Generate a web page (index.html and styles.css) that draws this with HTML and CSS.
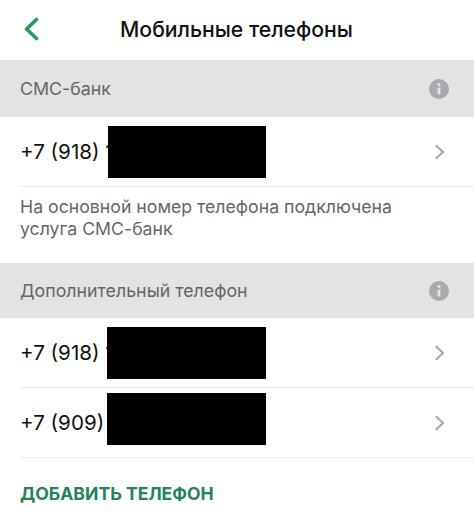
FILE: index.html
```html
<!DOCTYPE html>
<html lang="ru">
<head>
    <meta charset="UTF-8">
    <meta name="viewport" content="width=device-width, initial-scale=1.0">
    <title>Мобильные телефоны</title>
    <link rel="stylesheet" href="styles.css">
</head>
<body>
    <div class="screen">
        <header class="topbar">
            <svg class="back" width="16" height="24" viewBox="0 0 16 24"><path d="M13.5 2.5 3.5 12l10 9.5" fill="none" stroke="#259a62" stroke-width="3.6" stroke-linecap="round" stroke-linejoin="round"/></svg>
            <h1>Мобильные телефоны</h1>
        </header>

        <div class="band">
            <span class="band-title">СМС-банк</span>
            <svg class="info" width="20" height="20" viewBox="0 0 20 20"><circle cx="10" cy="10" r="10" fill="#a9a9ae"/><circle cx="10" cy="5.6" r="1.5" fill="#e3e3e3"/><rect x="8.6" y="8.4" width="2.8" height="7" rx="0.6" fill="#e3e3e3"/></svg>
        </div>
        <div class="row">
            <span class="phone">+7 (918) 1</span>
            <div class="redact redact-one"></div>
            <svg class="chevron" width="10" height="16" viewBox="0 0 10 16"><path d="M1.5 2 8 8l-6.500 6" fill="none" stroke="#a8a8a8" stroke-width="2.200" stroke-linecap="round" stroke-linejoin="round"/></svg>
        </div>
        <p class="note">На основной номер телефона подключена услуга СМС-банк</p>

        <div class="band band-second">
            <span class="band-title">Дополнительный телефон</span>
            <svg class="info" width="20" height="20" viewBox="0 0 20 20"><circle cx="10" cy="10" r="10" fill="#a9a9ae"/><circle cx="10" cy="5.6" r="1.5" fill="#e3e3e3"/><rect x="8.6" y="8.4" width="2.8" height="7" rx="0.6" fill="#e3e3e3"/></svg>
        </div>
        <div class="row">
            <span class="phone">+7 (918) 1</span>
            <div class="redact redact-two"></div>
            <svg class="chevron" width="10" height="16" viewBox="0 0 10 16"><path d="M1.5 2 8 8l-6.500 6" fill="none" stroke="#a8a8a8" stroke-width="2.200" stroke-linecap="round" stroke-linejoin="round"/></svg>
        </div>
        <div class="row">
            <span class="phone">+7 (909)</span>
            <div class="redact redact-three"></div>
            <svg class="chevron" width="10" height="16" viewBox="0 0 10 16"><path d="M1.5 2 8 8l-6.500 6" fill="none" stroke="#a8a8a8" stroke-width="2.200" stroke-linecap="round" stroke-linejoin="round"/></svg>
        </div>

        <div class="add">ДОБАВИТЬ ТЕЛЕФОН</div>
    </div>
</body>
</html>
```

FILE: styles.css
```css
body {
    margin: 0;
    background: #fff;
    font-family: Inter, "Noto Sans", sans-serif;
    color: #111;
}

.screen {
    width: 474px;
    height: 511px;
    overflow: hidden;
}

.topbar {
    height: 58px;
    padding: 0 0 2px 23px;
    display: flex;
    align-items: center;
}

.back {
    flex: none;
}

.topbar h1 {
    margin: 0 0 0 81px;
    font-size: 21.2px;
    font-weight: 500;
    white-space: nowrap;
}

.band {
    height: 57px;
    background: #e3e3e3;
    display: flex;
    align-items: center;
    justify-content: space-between;
    padding: 0 25px 0 20px;
    font-size: 17.8px;
    color: #666;
}

.band-second {
    height: 55px;
}

.info {
    flex: none;
}

.row {
    position: relative;
    height: 69px;
    margin-left: 20px;
    border-bottom: 1px solid #ececec;
    display: flex;
    align-items: center;
    justify-content: space-between;
}

.phone {
    font-size: 20.6px;
}

.chevron {
    flex: none;
    margin-right: 29px;
}

/* black boxes painted over the numbers */
.redact {
    position: absolute;
    left: 87px;
    width: 159px;
    height: 52px;
    background: #000;
}

.redact-one {
    top: 9px;
    left: 88px;
    width: 158px;
}

.redact-two {
    top: 9px;
}

.redact-three {
    top: 5px;
}

.note {
    margin: 0;
    height: 76px;
    width: 400px;
    padding: 9px 0 0 20px;
    box-sizing: border-box;
    font-size: 17.7px;
    line-height: 22px;
    color: #666;
}

.add {
    margin: 25px 0 0 20px;
    font-size: 17.6px;
    font-weight: 700;
    color: #23835a;
}
```
